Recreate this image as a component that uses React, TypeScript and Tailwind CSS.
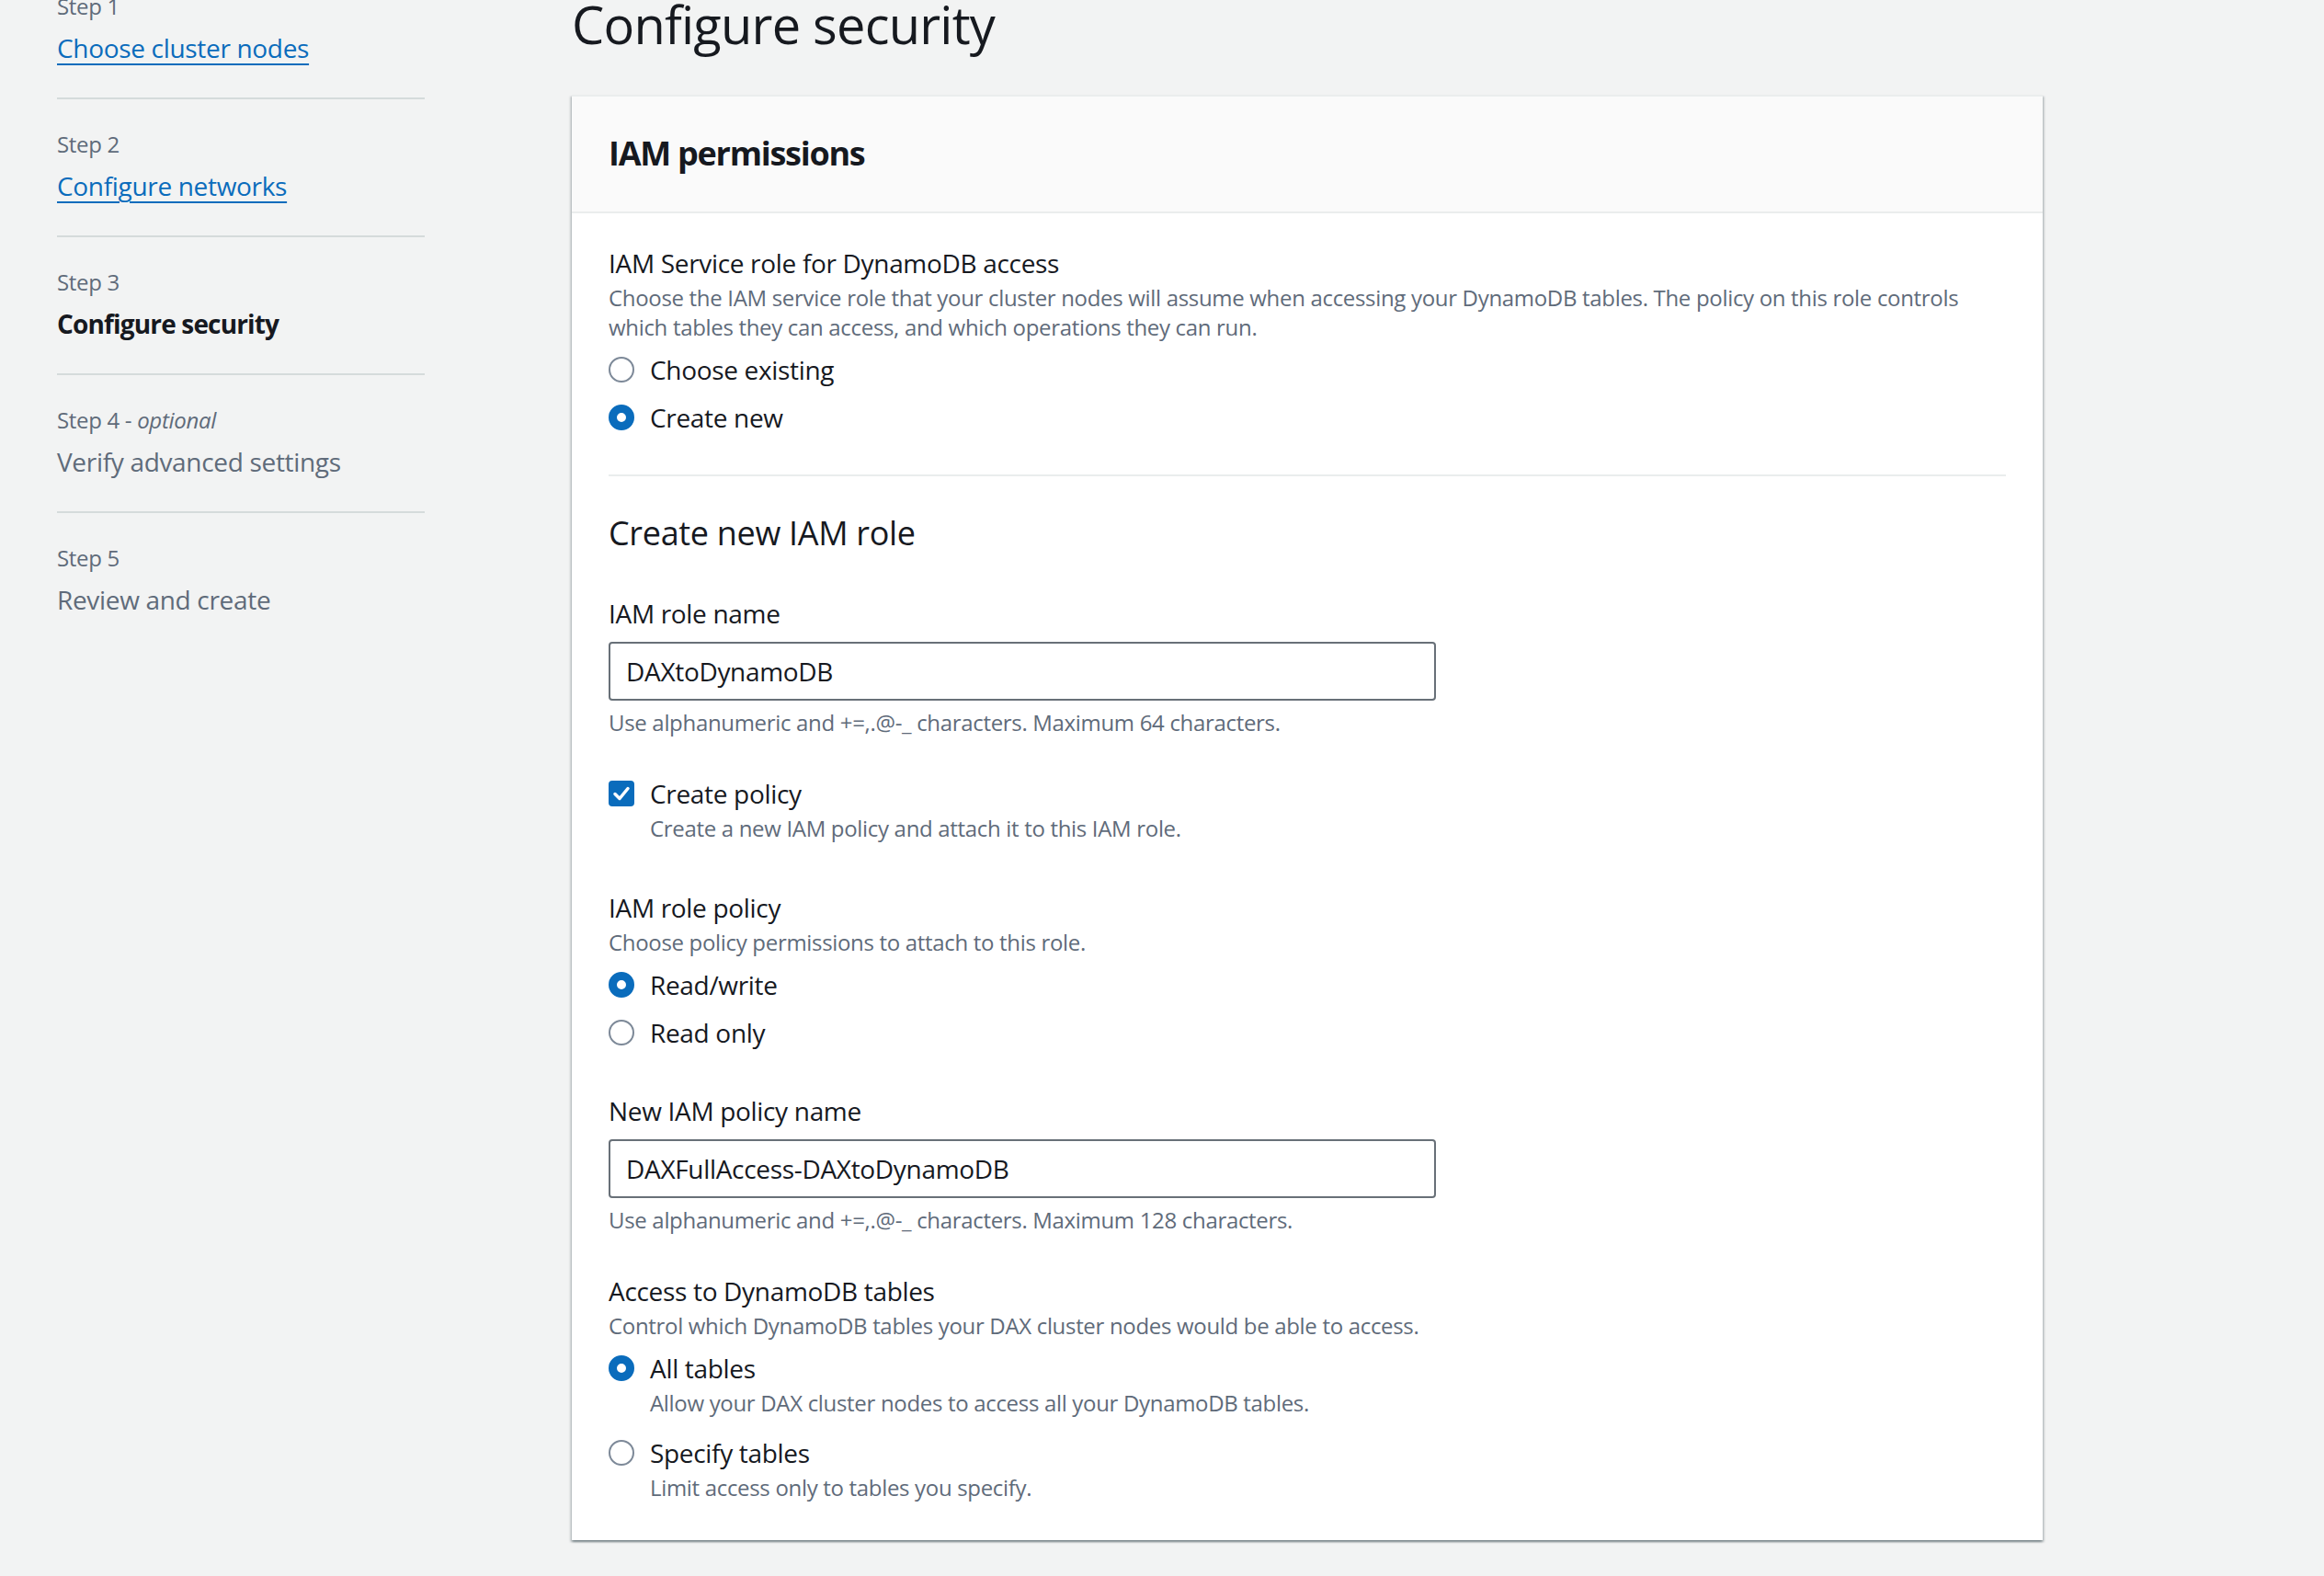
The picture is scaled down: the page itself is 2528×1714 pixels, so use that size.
const blue = 'border-[#0a6cbc]'

const steps = [
  { label: 'Step 1', title: 'Choose cluster nodes', state: 'link' },
  { label: 'Step 2', title: 'Configure networks', state: 'link' },
  { label: 'Step 3', title: 'Configure security', state: 'active' },
  { label: 'Step 4', optional: true, title: 'Verify advanced settings', state: 'disabled' },
  { label: 'Step 5', title: 'Review and create', state: 'disabled' },
]

function Radio({ checked, label, description }: { checked?: boolean; label: string; description?: string }) {
  return (
    <div>
      <label className="flex items-center gap-[17px] h-[40px] cursor-pointer">
        {checked ? (
          <span className={`w-[28px] h-[28px] rounded-full border-[9px] ${blue} bg-white shrink-0`} />
        ) : (
          <span className="w-[28px] h-[28px] rounded-full border-2 border-[#7d8998] bg-white shrink-0" />
        )}
        <span className="text-[28px] leading-[40px] text-[#16191f]">{label}</span>
      </label>
      {description && (
        <p className="mt-[2px] pl-[45px] text-[24px] leading-[32px] text-[#5f6b7a]">{description}</p>
      )}
    </div>
  )
}

function Field({ label, value, hint }: { label: string; value: string; hint: string }) {
  return (
    <div>
      <div className="text-[28px] leading-[40px] text-[#16191f]">{label}</div>
      <div className="mt-[11px] w-[900px] h-[64px] border-2 border-[#687078] rounded-[4px] flex items-center px-[17px] text-[28px] text-[#16191f] bg-white">
        {value}
      </div>
      <p className="mt-[8px] text-[24px] leading-[32px] text-[#5f6b7a]">{hint}</p>
    </div>
  )
}

export default function App() {
  return (
    <div className="min-h-screen bg-[#f2f3f3] font-['Open_Sans',sans-serif] tracking-[-0.02em] overflow-hidden">
      <div className="flex pl-[62px]">
        {/* wizard steps */}
        <nav className="w-[400px] shrink-0 -mt-[9px]">
          {steps.map((s, i) => (
            <div
              key={s.label}
              className={`${i === 0 ? 'pt-0' : 'pt-[33px]'} pb-[34px] ${i < steps.length - 1 ? 'border-b-2 border-[#d5dbdb]' : ''}`}
            >
              <div className="text-[24px] leading-[32px] text-[#5f6b7a]">
                {s.label}
                {s.optional && <> - <i>optional</i></>}
              </div>
              <div className="mt-[9px] text-[28px] leading-[40px]">
                {s.state === 'link' && (
                  <a href="#" className="text-[#0a6cbc] underline decoration-2 underline-offset-[6px]">
                    {s.title}
                  </a>
                )}
                {s.state === 'active' && (
                  <span className="font-bold tracking-[-0.03em] text-[#16191f]">{s.title}</span>
                )}
                {s.state === 'disabled' && <span className="text-[#5f6b7a]">{s.title}</span>}
              </div>
            </div>
          ))}
        </nav>

        <main className="ml-[160px] w-[1600px] -mt-[6px]">
          <h1 className="text-[56px] leading-[64px] tracking-[-0.014em] text-[#16191f]">Configure security</h1>

          <section className="mt-[45px] bg-white border-t-2 border-[#eaeded] shadow-[0_2px_2px_0_rgba(0,28,36,0.3),2px_2px_2px_0_rgba(0,28,36,0.15),-2px_2px_2px_0_rgba(0,28,36,0.15)]">
            <div className="bg-[#fafafa] border-b-2 border-[#eaeded] px-[40px] pt-[39px] pb-[40px]">
              <h2 className="text-[36px] leading-[46px] font-bold tracking-[-0.035em] text-[#16191f]">IAM permissions</h2>
            </div>

            <div className="px-[40px] pt-[34px] pb-[41px]">
              <div className="text-[28px] leading-[40px] text-[#16191f]">IAM Service role for DynamoDB access</div>
              <p className="mt-[2px] text-[24px] leading-[32px] text-[#5f6b7a]">
                Choose the IAM service role that your cluster nodes will assume when accessing your DynamoDB tables. The policy on this role controls
                <br />
                which tables they can access, and which operations they can run.
              </p>
              <div className="mt-[10px] flex flex-col gap-[12px]">
                <Radio label="Choose existing" />
                <Radio checked label="Create new" />
              </div>

              <hr className="mt-[42px] border-0 border-t-2 border-[#eaeded]" />

              <h3 className="mt-[40px] text-[36px] leading-[44px] text-[#16191f]">Create new IAM role</h3>

              <div className="mt-[45px]">
                <Field
                  label="IAM role name"
                  value="DAXtoDynamoDB"
                  hint="Use alphanumeric and +=,.@-_ characters. Maximum 64 characters."
                />
              </div>

              <div className="mt-[41px]">
                <label className="flex items-center gap-[17px] h-[40px]">
                  <svg width="28" height="28" viewBox="0 0 28 28" className="shrink-0">
                    <rect x="0" y="0" width="28" height="28" rx="4" fill="#0a6cbc" />
                    <path d="M7 14.5 L12 19.5 L21 8.5" fill="none" stroke="white" strokeWidth="3.5" strokeLinecap="round" strokeLinejoin="round" />
                  </svg>
                  <span className="text-[28px] leading-[40px] text-[#16191f]">Create policy</span>
                </label>
                <p className="mt-[2px] pl-[45px] text-[24px] leading-[32px] text-[#5f6b7a]">
                  Create a new IAM policy and attach it to this IAM role.
                </p>
              </div>

              <div className="mt-[50px]">
                <div className="text-[28px] leading-[40px] text-[#16191f]">IAM role policy</div>
                <p className="mt-[2px] text-[24px] leading-[32px] text-[#5f6b7a]">Choose policy permissions to attach to this role.</p>
                <div className="mt-[10px] flex flex-col gap-[12px]">
                  <Radio checked label="Read/write" />
                  <Radio label="Read only" />
                </div>
              </div>

              <div className="mt-[45px]">
                <Field
                  label="New IAM policy name"
                  value="DAXFullAccess-DAXtoDynamoDB"
                  hint="Use alphanumeric and +=,.@-_ characters. Maximum 128 characters."
                />
              </div>

              <div className="mt-[41px]">
                <div className="text-[28px] leading-[40px] text-[#16191f]">Access to DynamoDB tables</div>
                <p className="mt-[2px] text-[24px] leading-[32px] text-[#5f6b7a]">
                  Control which DynamoDB tables your DAX cluster nodes would be able to access.
                </p>
                <div className="mt-[10px] flex flex-col gap-[18px]">
                  <Radio checked label="All tables" description="Allow your DAX cluster nodes to access all your DynamoDB tables." />
                  <Radio label="Specify tables" description="Limit access only to tables you specify." />
                </div>
              </div>
            </div>
          </section>
        </main>
      </div>
    </div>
  )
}
